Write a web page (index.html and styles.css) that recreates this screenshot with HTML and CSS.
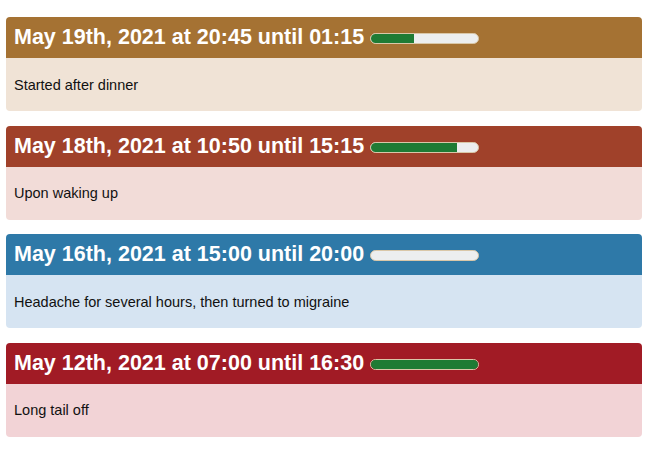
FILE: index.html
```html
<!DOCTYPE html>
<html>
<head>
<meta charset="utf-8">
<link rel="stylesheet" href="styles.css">
</head>
<body>
<div class="list">
  <div class="card c-brown">
    <div class="card-head"><span class="title">May 19th, 2021 at 20:45 until 01:15</span><span class="bar"><span class="fill" style="width:40%"></span></span></div>
    <div class="card-body">Started after dinner</div>
  </div>
  <div class="card c-rust">
    <div class="card-head"><span class="title">May 18th, 2021 at 10:50 until 15:15</span><span class="bar"><span class="fill" style="width:80%"></span></span></div>
    <div class="card-body">Upon waking up</div>
  </div>
  <div class="card c-blue">
    <div class="card-head"><span class="title">May 16th, 2021 at 15:00 until 20:00</span><span class="bar"><span class="fill" style="width:0%"></span></span></div>
    <div class="card-body">Headache for several hours, then turned to migraine</div>
  </div>
  <div class="card c-red">
    <div class="card-head"><span class="title">May 12th, 2021 at 07:00 until 16:30</span><span class="bar"><span class="fill" style="width:100%"></span></span></div>
    <div class="card-body">Long tail off</div>
  </div>
</div>
</body>
</html>
```
FILE: styles.css
```css
html, body {
  margin: 0;
  padding: 0;
  background: #ffffff;
}
.list {
  display: flex;
  flex-direction: column;
  gap: 14.5px;
  padding: 17px 10px 0 6px;
  font-family: "Liberation Sans", Arial, sans-serif;
}
.card {
  border-radius: 4px;
  overflow: hidden;
}
.card-head {
  height: 41px;
  display: flex;
  align-items: center;
  padding: 0 8px;
  color: #ffffff;
}
.title {
  font-size: 21.5px;
  font-weight: bold;
  white-space: nowrap;
}
.bar {
  margin-left: 6px;
  margin-top: 2px;
  width: 107px;
  height: 9px;
  border: 1px solid #d9c7a8;
  border-radius: 6px;
  background: #eceeef;
  overflow: hidden;
  display: flex;
}
.fill {
  display: block;
  height: 100%;
  background: #1e7b34;
}
.card-body {
  height: 53px;
  display: flex;
  align-items: center;
  padding: 0 8px;
  font-size: 14.5px;
  color: #111;
}
.c-brown .card-head { background: #a57233; }
.c-brown .card-body { background: #f0e3d6; }
.c-rust .card-head { background: #a0412a; }
.c-rust .card-body { background: #f2dcd8; }
.c-blue .card-head { background: #2e79a8; }
.c-blue .card-body { background: #d6e4f2; }
.c-red .card-head { background: #a11b25; }
.c-red .card-body { background: #f2d3d6; }
```
